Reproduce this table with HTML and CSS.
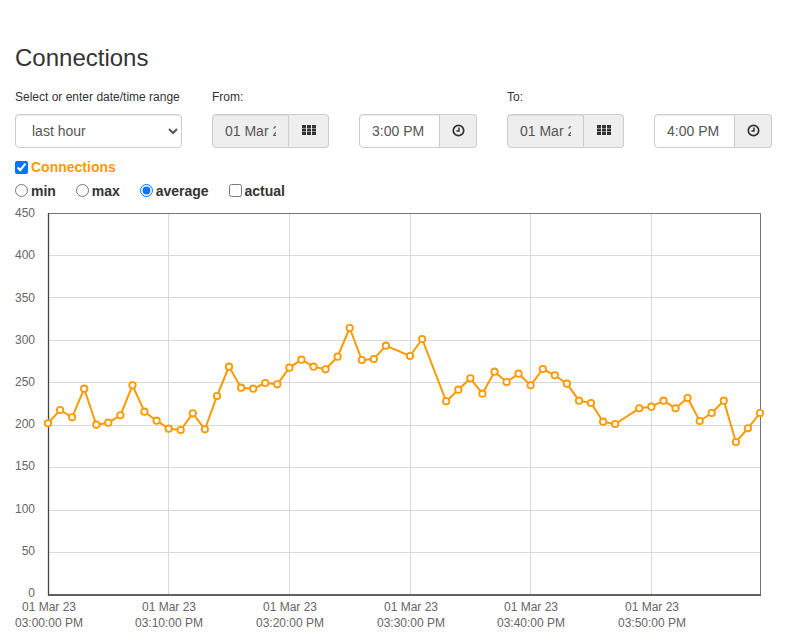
FILE: index.html
```html
<!DOCTYPE html>
<html lang="en">
<head>
<meta charset="utf-8">
<title>Connections</title>
<link rel="stylesheet" href="styles.css">
</head>
<body>
<main class="page">
  <h3 class="title">Connections</h3>

  <div class="controls">
    <div class="field">
      <label class="field-label">Select or enter date/time range</label>
      <select class="select"><option>last hour</option><option>last day</option></select>
    </div>
    <div class="field">
      <label class="field-label">From:</label>
      <div class="pair">
        <div class="group">
          <input class="input input-date" value="01 Mar 2023" readonly>
          <span class="addon"><svg class="icon-grid" width="14" height="10" viewBox="0 0 14 10"><g fill="#333"><rect x="0" y="0" width="4" height="3"/><rect x="5" y="0" width="4" height="3"/><rect x="10" y="0" width="4" height="3"/><rect x="0" y="3.5" width="4" height="3"/><rect x="5" y="3.5" width="4" height="3"/><rect x="10" y="3.5" width="4" height="3"/><rect x="0" y="7" width="4" height="3"/><rect x="5" y="7" width="4" height="3"/><rect x="10" y="7" width="4" height="3"/></g></svg></span>
        </div>
        <div class="group">
          <input class="input input-time" value="3:00 PM">
          <span class="addon"><svg class="icon-clock" width="13" height="13" viewBox="0 0 13 13"><circle cx="6.5" cy="6.5" r="5.2" fill="none" stroke="#333" stroke-width="1.7"/><path d="M7 3.4V7H4.4" fill="none" stroke="#333" stroke-width="1.5"/></svg></span>
        </div>
      </div>
    </div>
    <div class="field">
      <label class="field-label">To:</label>
      <div class="pair">
        <div class="group">
          <input class="input input-date" value="01 Mar 2023" readonly>
          <span class="addon"><svg class="icon-grid" width="14" height="10" viewBox="0 0 14 10"><g fill="#333"><rect x="0" y="0" width="4" height="3"/><rect x="5" y="0" width="4" height="3"/><rect x="10" y="0" width="4" height="3"/><rect x="0" y="3.5" width="4" height="3"/><rect x="5" y="3.5" width="4" height="3"/><rect x="10" y="3.5" width="4" height="3"/><rect x="0" y="7" width="4" height="3"/><rect x="5" y="7" width="4" height="3"/><rect x="10" y="7" width="4" height="3"/></g></svg></span>
        </div>
        <div class="group">
          <input class="input input-time" value="4:00 PM">
          <span class="addon"><svg class="icon-clock" width="13" height="13" viewBox="0 0 13 13"><circle cx="6.5" cy="6.5" r="5.2" fill="none" stroke="#333" stroke-width="1.7"/><path d="M7 3.4V7H4.4" fill="none" stroke="#333" stroke-width="1.5"/></svg></span>
        </div>
      </div>
    </div>
  </div>

  <div class="options">
    <div class="opt-row">
      <label class="series"><input class="check check-series" type="checkbox" checked>Connections</label>
    </div>
    <div class="opt-row">
      <label class="opt"><input class="check" type="radio" name="agg">min</label>
      <label class="opt"><input class="check" type="radio" name="agg">max</label>
      <label class="opt"><input class="check" type="radio" name="agg" checked>average</label>
      <label class="opt"><input class="check" type="checkbox">actual</label>
    </div>
  </div>

  <div class="chart">
    <svg class="chart-svg" width="787" height="429" viewBox="0 205 787 429">
      <g class="grid" stroke="#d9d9d9" stroke-width="1">
        <line x1="48" y1="552.5" x2="760" y2="552.5"/>
        <line x1="48" y1="510.5" x2="760" y2="510.5"/>
        <line x1="48" y1="467.5" x2="760" y2="467.5"/>
        <line x1="48" y1="425.5" x2="760" y2="425.5"/>
        <line x1="48" y1="382.5" x2="760" y2="382.5"/>
        <line x1="48" y1="340.5" x2="760" y2="340.5"/>
        <line x1="48" y1="297.5" x2="760" y2="297.5"/>
        <line x1="48" y1="255.5" x2="760" y2="255.5"/>
        <line x1="168.5" y1="213" x2="168.5" y2="595"/>
        <line x1="289.5" y1="213" x2="289.5" y2="595"/>
        <line x1="410.5" y1="213" x2="410.5" y2="595"/>
        <line x1="530.5" y1="213" x2="530.5" y2="595"/>
        <line x1="651.5" y1="213" x2="651.5" y2="595"/>
      </g>
      <rect x="48.5" y="213.5" width="712" height="381.5" fill="none" stroke="#777" stroke-width="1"/>
      <line x1="48.5" y1="213" x2="48.5" y2="595.5" stroke="#444" stroke-width="1.3"/>
      <line x1="48" y1="595" x2="761" y2="595" stroke="#444" stroke-width="1.3"/>

      <g class="ylabels" text-anchor="end">
        <text x="35" y="217">450</text>
        <text x="35" y="259.2">400</text>
        <text x="35" y="301.5">350</text>
        <text x="35" y="343.7">300</text>
        <text x="35" y="385.9">250</text>
        <text x="35" y="428.1">200</text>
        <text x="35" y="470.3">150</text>
        <text x="35" y="512.6">100</text>
        <text x="35" y="554.8">50</text>
        <text x="35" y="597">0</text>
      </g>
      <g class="xlabels" text-anchor="middle">
        <text x="49" y="611">01 Mar 23</text><text x="49" y="627">03:00:00 PM</text>
        <text x="169" y="611">01 Mar 23</text><text x="169" y="627">03:10:00 PM</text>
        <text x="290" y="611">01 Mar 23</text><text x="290" y="627">03:20:00 PM</text>
        <text x="411" y="611">01 Mar 23</text><text x="411" y="627">03:30:00 PM</text>
        <text x="531" y="611">01 Mar 23</text><text x="531" y="627">03:40:00 PM</text>
        <text x="652" y="611">01 Mar 23</text><text x="652" y="627">03:50:00 PM</text>
      </g>

      <polyline class="series-line" fill="none" stroke="#f90" stroke-width="2" stroke-linejoin="round"
        points="48,423.3 60.1,410 72.1,417.3 84.2,388.7 96.3,424.7 108.3,422.7 120.4,415.3 132.5,385.3 144.5,411.7 156.6,420.7 168.7,428.7 180.7,430 192.8,413.3 204.9,429.3 217,396 229,366.7 241.1,387.7 253.2,388.7 265.2,383 277.3,384.3 289.4,367.7 301.4,359.7 313.5,366.7 325.6,369.3 337.6,356.7 349.7,328 361.8,360 373.8,359 385.9,345.7 410,356 422.1,339 446.2,401.3 458.3,389.7 470.4,378.3 482.4,393.7 494.5,371.7 506.6,382 518.6,373.7 530.7,385.3 542.8,369 554.8,375.3 566.9,383.7 579,400.7 591,403 603.1,421.7 615.2,424 639.3,408.3 651.4,406.7 663.5,400.7 675.5,408.3 687.6,398 699.7,421 711.7,413 723.8,400.7 735.9,442 747.9,428.3 760,413"/>
      <g class="markers" fill="#fff" stroke="#f90" stroke-width="1.8">
        <circle cx="48" cy="423.3" r="3.2"/><circle cx="60.1" cy="410" r="3.2"/><circle cx="72.1" cy="417.3" r="3.2"/><circle cx="84.2" cy="388.7" r="3.2"/><circle cx="96.3" cy="424.7" r="3.2"/><circle cx="108.3" cy="422.7" r="3.2"/><circle cx="120.4" cy="415.3" r="3.2"/><circle cx="132.5" cy="385.3" r="3.2"/><circle cx="144.5" cy="411.7" r="3.2"/><circle cx="156.6" cy="420.7" r="3.2"/>
        <circle cx="168.7" cy="428.7" r="3.2"/><circle cx="180.7" cy="430" r="3.2"/><circle cx="192.8" cy="413.3" r="3.2"/><circle cx="204.9" cy="429.3" r="3.2"/><circle cx="217" cy="396" r="3.2"/><circle cx="229" cy="366.7" r="3.2"/><circle cx="241.1" cy="387.7" r="3.2"/><circle cx="253.2" cy="388.7" r="3.2"/><circle cx="265.2" cy="383" r="3.2"/><circle cx="277.3" cy="384.3" r="3.2"/>
        <circle cx="289.4" cy="367.7" r="3.2"/><circle cx="301.4" cy="359.7" r="3.2"/><circle cx="313.5" cy="366.7" r="3.2"/><circle cx="325.6" cy="369.3" r="3.2"/><circle cx="337.6" cy="356.7" r="3.2"/><circle cx="349.7" cy="328" r="3.2"/><circle cx="361.8" cy="360" r="3.2"/><circle cx="373.8" cy="359" r="3.2"/><circle cx="385.9" cy="345.7" r="3.2"/>
        <circle cx="410" cy="356" r="3.2"/><circle cx="422.1" cy="339" r="3.2"/><circle cx="446.2" cy="401.3" r="3.2"/><circle cx="458.3" cy="389.7" r="3.2"/><circle cx="470.4" cy="378.3" r="3.2"/><circle cx="482.4" cy="393.7" r="3.2"/><circle cx="494.5" cy="371.7" r="3.2"/><circle cx="506.6" cy="382" r="3.2"/><circle cx="518.6" cy="373.7" r="3.2"/>
        <circle cx="530.7" cy="385.3" r="3.2"/><circle cx="542.8" cy="369" r="3.2"/><circle cx="554.8" cy="375.3" r="3.2"/><circle cx="566.9" cy="383.7" r="3.2"/><circle cx="579" cy="400.7" r="3.2"/><circle cx="591" cy="403" r="3.2"/><circle cx="603.1" cy="421.7" r="3.2"/><circle cx="615.2" cy="424" r="3.2"/>
        <circle cx="639.3" cy="408.3" r="3.2"/><circle cx="651.4" cy="406.7" r="3.2"/><circle cx="663.5" cy="400.7" r="3.2"/><circle cx="675.5" cy="408.3" r="3.2"/><circle cx="687.6" cy="398" r="3.2"/><circle cx="699.7" cy="421" r="3.2"/><circle cx="711.7" cy="413" r="3.2"/><circle cx="723.8" cy="400.7" r="3.2"/><circle cx="735.9" cy="442" r="3.2"/><circle cx="747.9" cy="428.3" r="3.2"/><circle cx="760" cy="413" r="3.2"/>
      </g>
    </svg>
  </div>
</main>
</body>
</html>
```

FILE: styles.css
```css
html, body {
  margin: 0;
  padding: 0;
  background: #fff;
}

body {
  font-family: "Liberation Sans", Arial, sans-serif;
  color: #333;
  font-size: 14px;
  overflow: hidden;
}

.page {
  padding: 45px 15px 0;
}

.title {
  margin: 0 0 18px;
  font-size: 24px;
  line-height: 26px;
  font-weight: 400;
  color: #333;
}

.controls {
  display: grid;
  grid-template-columns: 167px 265px 265px;
  column-gap: 30px;
}

.field-label {
  display: block;
  font-size: 12px;
  line-height: 17px;
  margin-bottom: 8px;
  color: #333;
}

.select {
  display: block;
  box-sizing: border-box;
  width: 167px;
  height: 34px;
  padding: 6px 12px;
  font: 14px "Liberation Sans", Arial, sans-serif;
  color: #555;
  background-color: #fff;
  border: 1px solid #ccc;
  border-radius: 4px;
  box-shadow: inset 0 1px 1px rgba(0, 0, 0, .075);
}

.pair {
  display: grid;
  grid-template-columns: 117px 118px;
  column-gap: 30px;
}

.group {
  display: flex;
  height: 34px;
}

.input {
  box-sizing: border-box;
  min-width: 0;
  height: 34px;
  margin: 0;
  padding: 6px 12px;
  font: 14px "Liberation Sans", Arial, sans-serif;
  color: #555;
  border: 1px solid #ccc;
  border-radius: 4px 0 0 4px;
  box-shadow: inset 0 1px 1px rgba(0, 0, 0, .075);
  outline: none;
}

.input-date {
  width: 77px;
  background: #eee;
}

.input-time {
  width: 81px;
  background: #fff;
}

.addon {
  flex: 1;
  box-sizing: border-box;
  display: flex;
  align-items: center;
  justify-content: center;
  background: #eee;
  border: 1px solid #ccc;
  border-left: 0;
  border-radius: 0 4px 4px 0;
}

.icon-grid {
  display: block;
  margin-bottom: 3px;
}

.icon-clock {
  display: block;
  margin-bottom: 1px;
}

.options {
  margin-top: 9px;
  font-size: 14px;
  font-weight: 700;
}

.opt-row {
  line-height: 20px;
  height: 20px;
}

.opt-row + .opt-row {
  margin-top: 4px;
}

.series {
  color: #f90;
}

.opt {
  margin-right: 16px;
  color: #333;
}

.check {
  width: 13px;
  height: 13px;
  margin: 0 3px 0 0;
  vertical-align: -1px;
}

.check-series {
  vertical-align: -2px;
}

.chart {
  margin: 4px -15px 0;
}

.chart-svg {
  display: block;
}

.ylabels text,
.xlabels text {
  font-family: "Liberation Sans", Arial, sans-serif;
  font-size: 12px;
  fill: #666;
}
```
